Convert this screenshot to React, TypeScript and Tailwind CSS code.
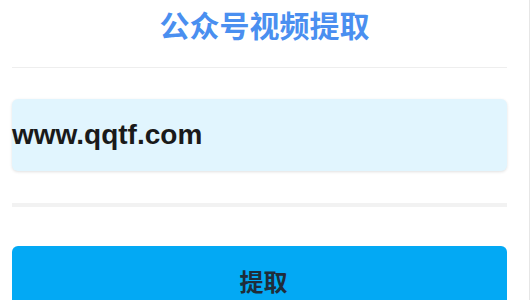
export default function App() {
  return (
    <div className="h-[300px] w-[530px] overflow-hidden border-r border-[#e6e6e6] bg-white">
      <div className="px-3">
        <h1 className="pt-[9px] text-center text-[30px] font-bold leading-[30px] text-[#4a8ff0] [font-family:'Noto_Sans_CJK_SC',sans-serif]">
          公众号视频提取
        </h1>
        <div className="mt-[28px] h-px w-[495px] bg-[#eeeeee]" />
        <div className="mt-[31px] flex h-[72px] w-[495px] items-center rounded-md bg-[#e1f5fe] shadow-[0_1px_3px_rgba(0,0,0,0.12)]">
          <span className="text-[28px] font-bold text-[#1a1a1a] [font-family:'Liberation_Sans',Arial,sans-serif]">
            www.qqtf.com
          </span>
        </div>
        <div className="mt-[32px] h-[4px] w-[495px] bg-[#f2f2f2]" />
        <button className="mt-[39px] flex h-[70px] w-[495px] items-center justify-center rounded-md bg-[#03a9f4] pl-[8px] text-[24px] font-semibold text-[#1f2d3a] [font-family:'Noto_Sans_CJK_SC',sans-serif]">
          提取
        </button>
      </div>
    </div>
  )
}
